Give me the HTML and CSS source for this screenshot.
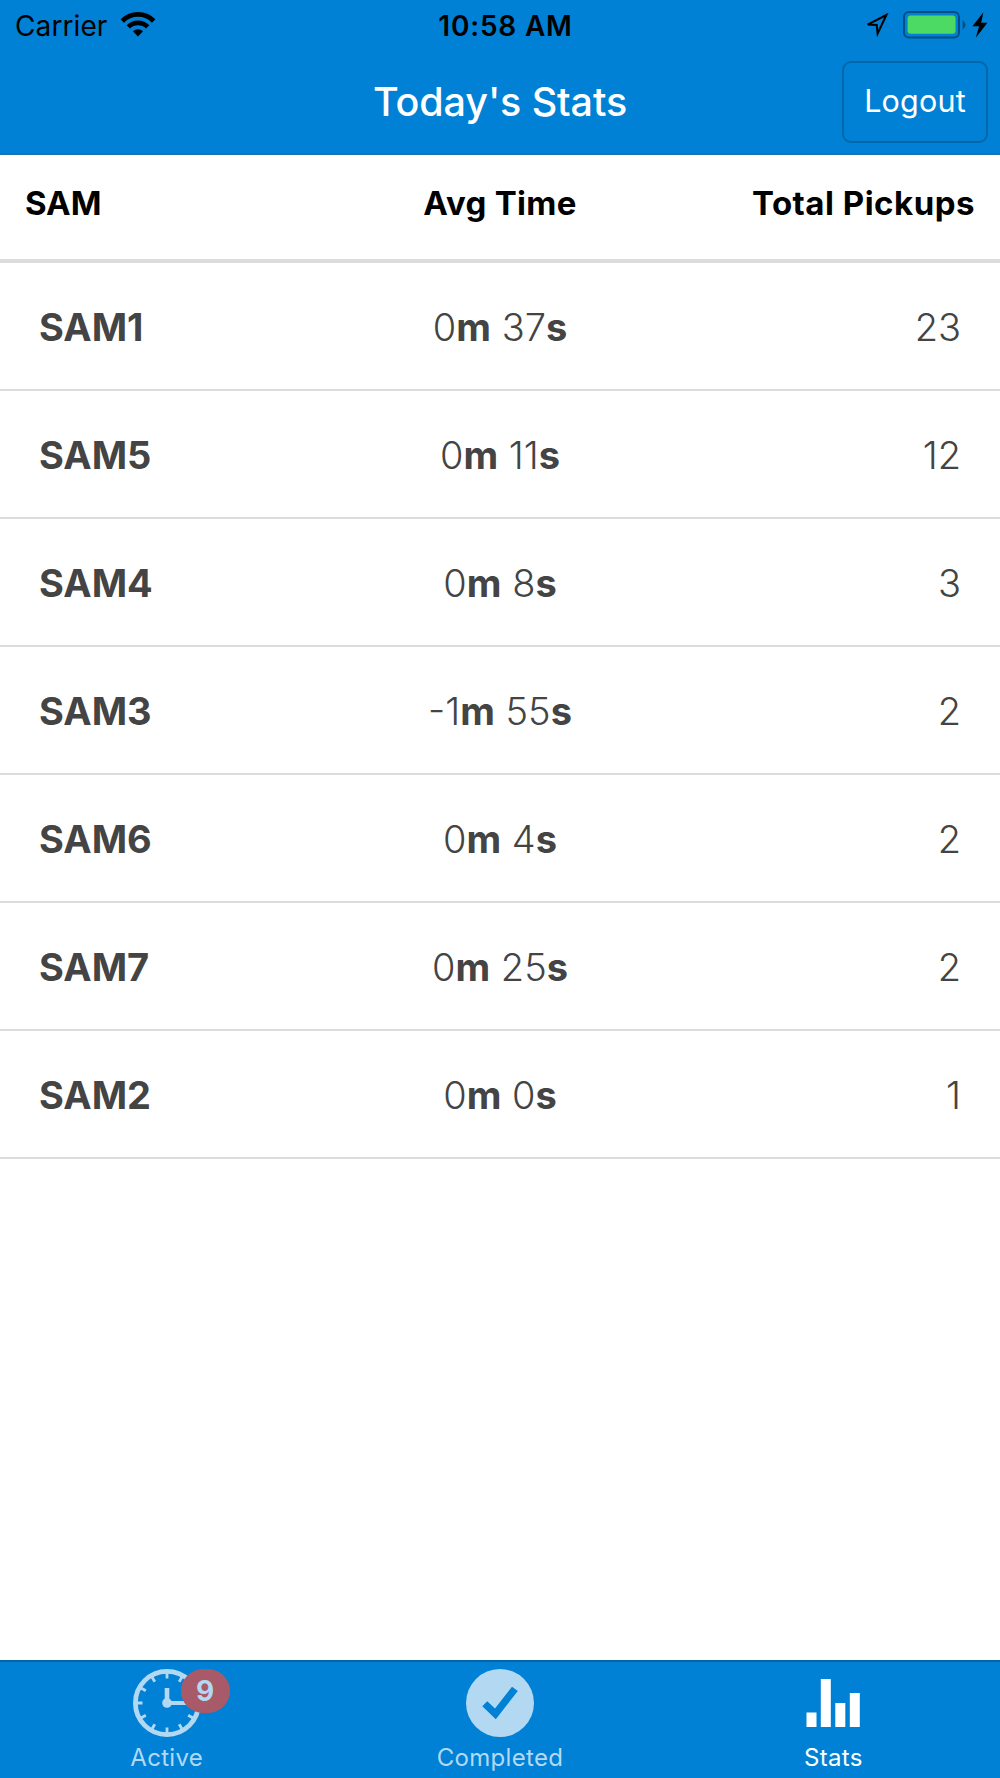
FILE: index.html
```html
<!DOCTYPE html>
<html lang="en">
<head>
  <meta charset="UTF-8">
  <meta name="viewport" content="width=device-width, initial-scale=1.0">
  <title>Today's Stats</title>
  <link rel="stylesheet" href="styles.css">
</head>
<body>
  <header class="header">
    <div class="status-bar">
      <div class="status-left">
        <span class="carrier">Carrier</span>
        <svg class="wifi" width="36" height="26" viewBox="0 0 36 26">
          <path d="M2.3 9 A22 22 0 0 1 33.7 9" fill="none" stroke="#000" stroke-width="4.8"/>
          <path d="M8.3 14.9 A13.8 13.8 0 0 1 27.7 14.9" fill="none" stroke="#000" stroke-width="4.8"/>
          <path d="M18 24.4 L12.9 19.2 A7.5 7.5 0 0 1 23.1 19.2 Z"/>
        </svg>
      </div>
      <span class="time">10:58 AM</span>
      <div class="status-right">
        <svg width="25" height="25" viewBox="0 0 25 25">
          <path d="M22.4 2 L3.5 11.6 L12.7 11.9 L13.6 20.5 Z" fill="none" stroke="#000" stroke-width="2"/>
        </svg>
        <svg class="battery" width="64" height="28" viewBox="0 0 64 28">
          <rect x="1" y="1" width="55" height="25.5" rx="5" fill="none" stroke="#004e81" stroke-width="2"/>
          <rect x="4.6" y="4.6" width="48" height="18.2" rx="3" fill="#4cd964"/>
          <path d="M59.7 9 Q65.5 13.8 59.7 18.6 Z" fill="#004e81"/>
        </svg>
        <svg class="bolt" width="16" height="26" viewBox="0 0 16 26">
          <path d="M11.4 0.2 L0.4 14.2 L7 14.2 L3.8 25.8 L15.4 10.8 L9.2 10.8 Z"/>
        </svg>
      </div>
    </div>
    <div class="nav-bar">
      <h1 class="title">Today's Stats</h1>
      <button class="logout">Logout</button>
    </div>
  </header>

  <main class="stats">
    <div class="stats-head">
      <span class="head-sam">SAM</span>
      <span class="head-avg">Avg Time</span>
      <span class="head-total">Total Pickups</span>
    </div>
    <div class="stats-row">
      <b>SAM1</b>
      <span class="avg">0<b>m</b> 37<b>s</b></span>
      <span class="total">23</span>
    </div>
    <div class="stats-row">
      <b>SAM5</b>
      <span class="avg">0<b>m</b> 11<b>s</b></span>
      <span class="total">12</span>
    </div>
    <div class="stats-row">
      <b>SAM4</b>
      <span class="avg">0<b>m</b> 8<b>s</b></span>
      <span class="total">3</span>
    </div>
    <div class="stats-row">
      <b>SAM3</b>
      <span class="avg">-1<b>m</b> 55<b>s</b></span>
      <span class="total">2</span>
    </div>
    <div class="stats-row">
      <b>SAM6</b>
      <span class="avg">0<b>m</b> 4<b>s</b></span>
      <span class="total">2</span>
    </div>
    <div class="stats-row">
      <b>SAM7</b>
      <span class="avg">0<b>m</b> 25<b>s</b></span>
      <span class="total">2</span>
    </div>
    <div class="stats-row">
      <b>SAM2</b>
      <span class="avg">0<b>m</b> 0<b>s</b></span>
      <span class="total">1</span>
    </div>
  </main>

  <nav class="tab-bar">
    <a class="tab">
      <div class="tab-icon">
        <svg width="68" height="68" viewBox="-34 -34 68 68">
          <g fill="none" stroke="#b3d9f2">
            <circle r="31.6" stroke-width="4.8"/>
            <path stroke-width="2.8" d="M0 -30V-24.5M0 30V24.5M30 0H24.5M-30 0H-24.5M15 -26L12.2 -21.2M26 -15L21.2 -12.2M26 15L21.2 12.2M15 26L12.2 21.2M-15 26L-12.2 21.2M-26 15L-21.2 12.2M-26 -15L-21.2 -12.2M-15 -26L-12.2 -21.2"/>
            <path stroke-width="4.6" d="M0 -15V0"/>
            <path stroke-width="4" d="M0 0H20"/>
          </g>
          <circle r="4.8" fill="#b3d9f2"/>
        </svg>
        <span class="badge">9</span>
      </div>
      <span class="tab-label">Active</span>
    </a>
    <a class="tab">
      <div class="tab-icon">
        <svg width="68" height="68" viewBox="-34 -34 68 68">
          <circle r="34" fill="#b3d9f2"/>
          <path d="M-17.7 3.3 L-12.8 -1.7 L-5 5.6 L12 -16.3 L17.8 -12 L-4.2 16.3 Z" fill="#0081d5"/>
        </svg>
      </div>
      <span class="tab-label">Completed</span>
    </a>
    <a class="tab active">
      <div class="tab-icon">
        <svg width="68" height="68" viewBox="0 0 68 68">
          <path fill="#fff" d="M7.5 43.5H17.5V58H7.5ZM21.8 10H31.8V58H21.8ZM36.3 34H46.3V58H36.3ZM50.8 24H60.8V58H50.8Z"/>
        </svg>
      </div>
      <span class="tab-label">Stats</span>
    </a>
  </nav>
</body>
</html>
```

FILE: styles.css
```css
* {
  box-sizing: border-box;
}
body {
  margin: 0;
  height: 1778px;
  display: flex;
  flex-direction: column;
  background: #fff;
  font-family: Inter, "Liberation Sans", sans-serif;
}
.header {
  height: 155px;
  background: #0081d5;
  border-bottom: 2px solid #1a72b0;
}
.status-bar {
  height: 51px;
  padding: 0 12px 0 15px;
  display: grid;
  grid-template-columns: 1fr auto 1fr;
  align-items: center;
  font-size: 28px;
}
.status-left,
.status-right {
  display: flex;
  align-items: center;
}
.carrier {
  width: 92px;
  letter-spacing: 0.1px;
}
.wifi {
  margin-left: 13px;
  margin-top: -1px;
}
.time {
  font-weight: 600;
  letter-spacing: 0.8px;
  padding-left: 8px;
}
.status-right {
  justify-content: flex-end;
}
.battery {
  margin-left: 14px;
  margin-top: -2px;
}
.bolt {
  margin-left: 5px;
  margin-top: -2px;
}
.nav-bar {
  height: 102px;
  padding: 10px 12px 0 0;
  display: grid;
  grid-template-columns: 1fr auto 1fr;
  align-items: start;
}
.title {
  grid-column: 2;
  margin: 0;
  padding-left: 12px;
  line-height: 83px;
  font-size: 39.5px;
  font-weight: 500;
  letter-spacing: -0.1px;
  color: #fff;
}
.logout {
  justify-self: end;
  width: 146px;
  height: 82px;
  padding: 0 0 4px;
  border: 2px solid #0067aa;
  border-radius: 9px;
  background: none;
  color: #fff;
  font-family: inherit;
  font-size: 30.5px;
  letter-spacing: 0.2px;
}
.stats {
  flex: 1;
}
.stats-head,
.stats-row {
  display: grid;
  grid-template-columns: 1fr auto 1fr;
  align-items: center;
}
.stats-head {
  height: 108px;
  padding: 0 25px 8px;
  border-bottom: 4px solid #dcdcdc;
  font-size: 33px;
  font-weight: 700;
}
.stats-row {
  height: 128px;
  padding: 2px 39px 0;
  border-bottom: 2px solid #dcdcdc;
  font-size: 38px;
  font-weight: 350;
  color: #444;
}
.stats-row b {
  font-weight: 700;
}
.head-avg {
  letter-spacing: 0.3px;
}
.head-total {
  letter-spacing: 0.5px;
}
.head-total,
.total {
  text-align: right;
}
.tab-bar {
  height: 118px;
  display: grid;
  grid-template-columns: repeat(3, 1fr);
  background: #0081d5;
  border-top: 2px solid #0064a5;
}
.tab {
  padding-top: 7px;
  display: flex;
  flex-direction: column;
  align-items: center;
  color: #b3d9f2;
}
.tab.active {
  color: #fff;
}
.tab-icon {
  position: relative;
  width: 68px;
  height: 68px;
}
.badge {
  position: absolute;
  left: 48px;
  top: 0;
  width: 49px;
  height: 44px;
  border-radius: 22px;
  background: #a85a68;
  font-size: 28px;
  font-weight: 700;
  line-height: 44px;
  text-align: center;
}
.tab-label {
  margin-top: 6px;
  line-height: 29px;
  font-size: 24px;
  letter-spacing: 0.3px;
}
```
